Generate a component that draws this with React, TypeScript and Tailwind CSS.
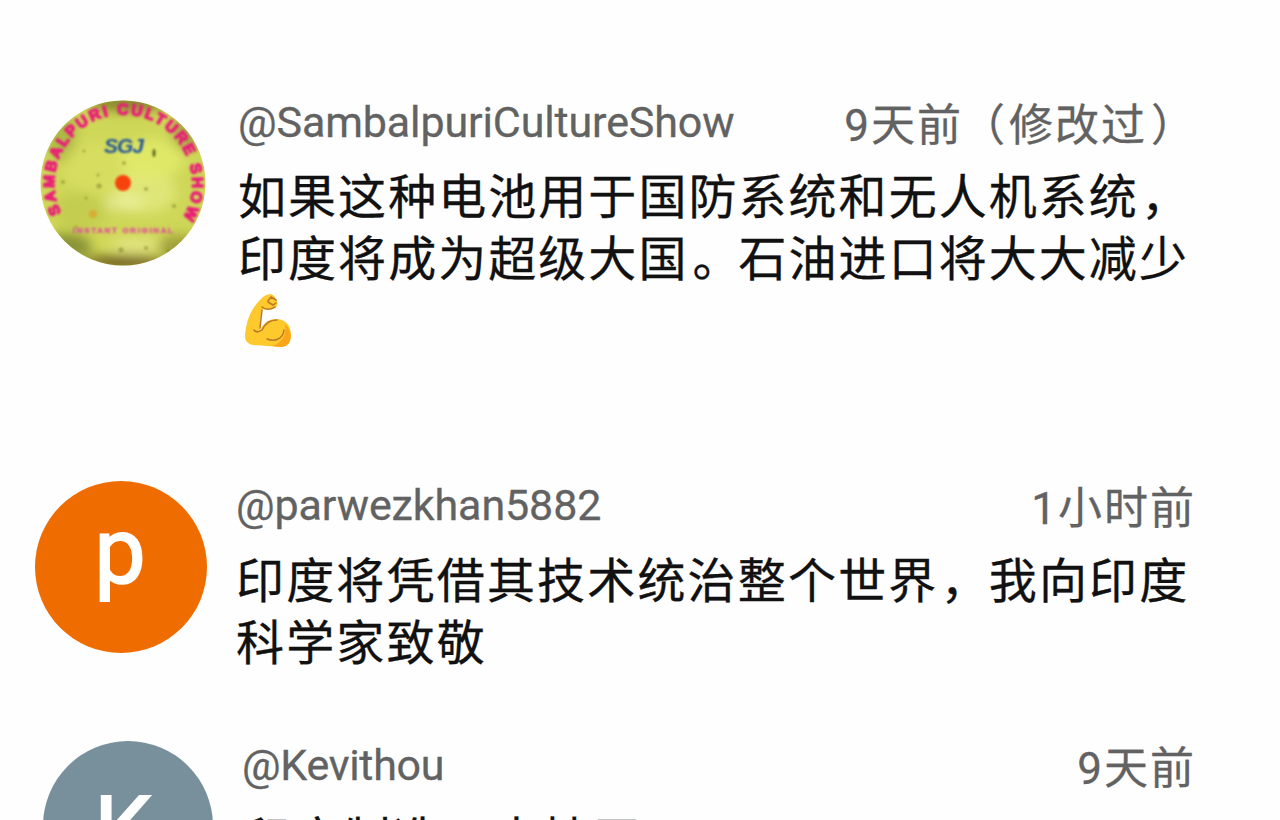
import type { ReactNode } from "react";

const BLOTCHES = [
  { cx: 88, cy: 4, rx: 40, ry: 8, fill: "#6f6a1c", opacity: 0.8 },
  { cx: 22, cy: 38, rx: 14, ry: 26, fill: "#8d9a32", opacity: 0.5 },
  { cx: 146, cy: 34, rx: 14, ry: 18, fill: "#7b7c2c", opacity: 0.5 },
  { cx: 60, cy: 70, rx: 38, ry: 28, fill: "#d8df62", opacity: 0.7 },
  { cx: 106, cy: 92, rx: 30, ry: 22, fill: "#eaf08c", opacity: 0.6 },
  { cx: 112, cy: 60, rx: 32, ry: 20, fill: "#e3ec6c", opacity: 0.8 },
  { cx: 84, cy: 104, rx: 20, ry: 8, fill: "#f2f4b0", opacity: 0.6 },
  { cx: 40, cy: 112, rx: 26, ry: 20, fill: "#bcc64a", opacity: 0.6 },
  { cx: 94, cy: 146, rx: 24, ry: 8, fill: "#e6e68a", opacity: 0.8 },
  { cx: 26, cy: 148, rx: 26, ry: 14, fill: "#6c7722", opacity: 0.7 },
  { cx: 84, cy: 163, rx: 40, ry: 7, fill: "#5f4512", opacity: 0.85 },
  { cx: 140, cy: 148, rx: 22, ry: 12, fill: "#807c28", opacity: 0.6 },
];

const SPECKS = [
  [44, 52, 1.5],
  [84, 64, 2],
  [59, 87, 2.5],
  [58, 76, 1.5],
  [23, 83, 2],
  [46, 99, 1.5],
  [106, 90, 2],
  [134, 107, 2],
  [81, 151, 2.5],
  [106, 149, 2],
  [128, 152, 2],
  [36, 128, 1.5],
];

function RecordAvatar() {
  return (
    <svg viewBox="0 0 168 168" className="size-42">
      <defs>
        <clipPath id="disc">
          <circle cx="83" cy="84" r="82.5" />
        </clipPath>
        <filter id="soft">
          <feGaussianBlur stdDeviation="6" />
        </filter>
        <filter id="ink">
          <feGaussianBlur stdDeviation="0.8" />
        </filter>
        <path id="rim" d="M 21 114 A 69 69 0 1 1 143 119" />
      </defs>
      <g clipPath="url(#disc)">
        <rect width="168" height="168" fill="#cfd758" />
        <g filter="url(#soft)">
          {BLOTCHES.map((b, i) => (
            <ellipse key={i} {...b} />
          ))}
        </g>
        <g filter="url(#ink)">
          {SPECKS.map(([x, y, r], i) => (
            <circle key={i} cx={x} cy={y} r={r} fill="#76802a" opacity="0.55" />
          ))}
          <ellipse cx="114" cy="54" rx="1.5" ry="4" fill="#5c6a1e" />
          <circle cx="53" cy="115" r="4" fill="#d9a52c" opacity="0.8" />
          <text fontFamily="Liberation Sans" fontSize="15.5" fontWeight="700" fill="#ea1f78" stroke="#ea1f78" strokeWidth="1.4">
            <textPath href="#rim" textLength="283" lengthAdjust="spacing">
              SAMBALPURI CULTURE SHOW
            </textPath>
          </text>
          <text x="64" y="54" fontFamily="Liberation Sans" fontStyle="italic" fontWeight="700" fontSize="21" fill="#24549a" textLength="40">
            SGJ
          </text>
          <text x="33" y="134" fontFamily="Liberation Sans" fontWeight="700" fontSize="8" fill="#de5c92" stroke="#de5c92" strokeWidth="0.5" textLength="100">
            INSTANT ORIGINAL
          </text>
          <circle cx="83" cy="84" r="8" fill="#f8430d" />
        </g>
      </g>
    </svg>
  );
}

function Bicep() {
  return (
    <svg viewBox="0 0 48 56" className="mt-0.5 ml-[7px] h-14 w-12">
      <path
        d="M15 7 C18 3 22 1 26 1 C29 2 30 4 31 6 C33 9 33 13 30 15 C27 17 23 17 18 16 C15 23 15 31 15 37 C19 29 25 26 31 26 C41 26 46 33 46 42 C46 50 42 54 35 54 L8 52 C3 51 0 48 0 43 C1 28 6 16 15 7 Z"
        fill="#fdc92c"
      />
      <path d="M40 31 C46 36 47 45 44 50 C41 55 34 54 27 53 C37 50 42 42 40 31Z" fill="#fba51d" />
      <path
        d="M9 37 C11 40 14 39 17 37 C20 30 25 27 32 27 M22 46 C30 49 38 46 39 37 M15 35 L17 17 M17 14 C20 17 26 17 30 14 M23 8 L26 4 L31 7 M23 9 L28 12 L31 10"
        fill="none"
        stroke="#b9782a"
        strokeWidth="1.5"
        strokeLinecap="round"
      />
    </svg>
  );
}

function Letter({ children }: { children: ReactNode }) {
  return <span className="font-['Roboto',sans-serif] font-normal text-white [-webkit-text-stroke:2px_white]">{children}</span>;
}

export default function App() {
  return (
    <main className="h-[820px] w-[1280px] overflow-hidden bg-[#fefefe] font-['Roboto','Noto_Sans_CJK_SC',sans-serif] text-[#111]">
      <article className="flex h-[381px] pt-[99px] pl-10">
        <RecordAvatar />
        <div className="ml-[30px] w-[960px]">
          <header className="flex h-[68px] justify-between pr-[5px] text-[#626262]">
            <span className="text-[43px] leading-[46px] tracking-[-0.12px] [-webkit-text-stroke:0.3px_#626262]">@SambalpuriCultureShow</span>
            <time className="pt-px text-[44px] leading-[52px] tracking-[2px] whitespace-nowrap [-webkit-text-stroke:0.3px_#626262]">
              9天前<span className="relative -left-0.5">（</span>修改过<span className="relative left-1">）</span>
            </time>
          </header>
          <p className="text-[48px] leading-[62px] tracking-[2.05px] whitespace-nowrap [-webkit-text-stroke:0.3px_#111]">
            如果这种电池用于国防系统和无人机系统<span className="relative left-0.5">，</span>
            <br />
            印度将成为超级大国<span className="relative left-1">。</span>石油进口将大大减少
          </p>
          <Bicep />
        </div>
      </article>

      <article className="flex h-[260px] pt-[100px] pl-[35px]">
        <div className="flex size-43 justify-center rounded-full bg-[#ef6c00] pr-0.5 text-[91px] leading-[143px]">
          <Letter>p</Letter>
        </div>
        <div className="ml-[29px] w-[960px]">
          <header className="flex h-[70px] justify-between text-[#626262]">
            <span className="text-[43px] leading-[48px] tracking-[-0.1px] [-webkit-text-stroke:0.3px_#626262]">@parwezkhan5882</span>
            <time className="pt-px text-[44px] leading-[54px] tracking-[2px] [-webkit-text-stroke:0.3px_#626262]">1小时前</time>
          </header>
          <p className="text-[48px] leading-[62px] tracking-[2.18px] whitespace-nowrap [-webkit-text-stroke:0.3px_#111]">
            印度将凭借其技术统治整个世界<span className="relative left-0.5">，</span>我向印度
            <br />
            科学家致敬
          </p>
        </div>
      </article>

      <article className="flex pt-[100px] pl-[43px]">
        <div className="flex size-[170px] justify-center rounded-full bg-[#78909c] pr-2.5 text-[92px] leading-[180px]">
          <Letter>K</Letter>
        </div>
        <div className="ml-[29px] w-[952px]">
          <header className="flex h-[69px] justify-between text-[#626262]">
            <span className="text-[43px] leading-[48px] tracking-[-0.3px] [-webkit-text-stroke:0.3px_#626262]">@Kevithou</span>
            <time className="relative left-0.5 pt-px text-[44px] leading-[54px] tracking-[2px] [-webkit-text-stroke:0.3px_#626262]">9天前</time>
          </header>
          <p className="text-[48px] leading-[62px] tracking-[2.1px] whitespace-nowrap [-webkit-text-stroke:0.3px_#111]">印度制造，支持王</p>
        </div>
      </article>
    </main>
  );
}
